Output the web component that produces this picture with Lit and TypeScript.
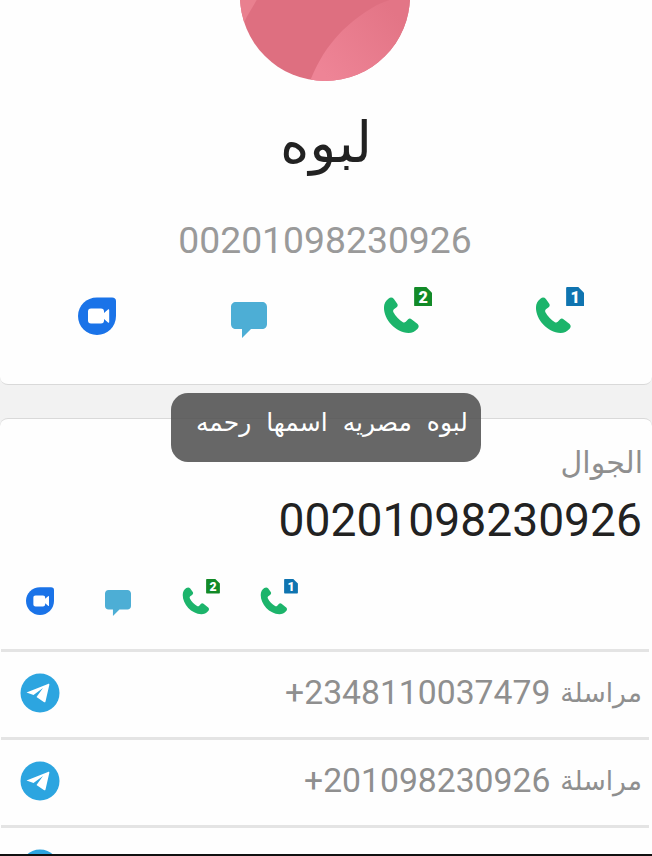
import { LitElement, html, css, svg } from "lit";
import { customElement } from "lit/decorators.js";

const phone = (size: number, num: string, color: string) => html`
  <span class="ph" style="width:${size}px;height:${size}px">
    <svg class="ic" width=${size} height=${size} viewBox="0 0 39 39">
      <path fill="#1cb46b" d="M6 1.5C8 0 10 .5 11.5 2L15 7C16 8.5 15.5 10 14 11L11.5 13C10.5 14 10.5 15 11 16C13 20 17 24 21 26.5C22 27 23 27 24 26L26.5 23.5C27.5 22.5 29 22.5 30 23.5L36.5 28.5C38 30 38 32 36.5 33.5C34 36.5 30.5 38 27 38C13 37 1 24 1 11C1 7 3 3.5 6 1.5Z"/>
    </svg>
    <svg class="sim" width=${size * 0.5} height=${size * 0.52} viewBox="0 0 18 19" style="top:${-(size * 0.27)}px;left:${size * 0.84}px">
      <path fill=${color} d="M1 0H12L18 6V18a1 1 0 0 1-1 1H1a1 1 0 0 1-1-1V1a1 1 0 0 1 1-1Z"/>
      <text x="9" y="15.5" text-anchor="middle" font-family="Roboto, sans-serif" font-weight="900" font-size="16" fill="#fff">${num}</text>
    </svg>
  </span>`;

const duo = (size: number) => html`
  <svg class="ic" width=${size} height=${size} viewBox="0 0 38 38">
    <path fill="#1a73e8" d="M19 .5H34C36.5 .5 38 2 38 4V19C38 29.5 29.5 38 19 38S0 29.5 0 19 8.5 .5 19 .5Z"/>
    <path fill="#fff" d="M13 11.5H23C25 11.5 26 12.7 26 14.5V16L30 12.5C30.6 12 31.2 12.3 31.2 13V25C31.2 25.7 30.6 26 30 25.5L26 22V23.5C26 25.3 25 26.5 23 26.5H13C11 26.5 10 25.3 10 23.5V14.5C10 12.7 11 11.5 13 11.5Z"/>
  </svg>`;

const chat = (size: number) => html`
  <svg class="ic chat" width=${size} height=${size} viewBox="0 0 36 36">
    <path fill="#4daed5" d="M5 0H31C34 0 36 2 36 5V22C36 25 34 27 31 27H20L11 36V27H5C2 27 0 25 0 22V5C0 2 2 0 5 0Z"/>
  </svg>`;

const telegram = () => html`
  <svg width="40" height="40" viewBox="0 0 40 40">
    <circle cx="20" cy="20" r="19.5" fill="#2ca5e0"/>
    <path fill="#fff" d="M6.5 19.5L28 11C29 10.6 29.5 11.2 29.3 12L25.5 28.5C25.3 29.5 24.5 29.5 23.8 29L16.5 24L23 15L13.5 22Z"/>
  </svg>`;

@customElement("app-root")
export class AppRoot extends LitElement {
  static styles = css`
    :host {
      display: block;
      position: relative;
      width: 652px;
      height: 856px;
      overflow: hidden;
      background: #f2f2f2;
      font-family: Roboto, "DejaVu Sans", sans-serif;
    }
    .card {
      background: #fefefe;
      border-bottom: 1px solid #d9d9d9;
      border-radius: 0 0 8px 8px;
    }
    .head {
      height: 385px;
      box-sizing: border-box;
      display: flex;
      flex-direction: column;
      overflow: hidden;
    }
    .avatar {
      display: block;
      margin: -89px 0 0 240px;
      flex: none;
    }
    .name {
      font-family: "DejaVu Sans", sans-serif;
      font-size: 56px;
      line-height: 64px;
      color: #222;
      text-align: center;
      margin-top: 30px;
    }
    .headnum {
      font-size: 37.3px;
      line-height: 44px;
      color: #9a9a9a;
      text-align: center;
      margin-top: 43px;
      padding-right: 2px;
    }
    .icons {
      display: flex;
      align-items: flex-start;
    }
    .cell {
      display: flex;
      justify-content: center;
      align-items: flex-start;
    }
    .ic { display: block; flex: none; }
    .ph { display: block; position: relative; flex: none; }
    .sim { display: block; position: absolute; }
    .toprow {
      margin-top: 35px;
      padding-left: 21px;
    }
    .toprow .cell { width: 152px; height: 38px; }
    .toprow .chat { margin-top: 5px; }
    .main {
      margin-top: 33px;
      border-top: 1px solid #d9d9d9;
      border-bottom: 0;
      border-radius: 8px 8px 0 0;
      height: 438px;
      overflow: hidden;
      display: flex;
      flex-direction: column;
      box-sizing: border-box;
    }
    .label {
      font-family: "DejaVu Sans", sans-serif;
      font-size: 30px;
      line-height: 36px;
      color: #8f8f8f;
      text-align: right;
      padding: 26px 9px 0 0;
    }
    .bignum {
      font-size: 46.2px;
      line-height: 54px;
      color: #222;
      text-align: right;
      padding: 12px 10px 0 0;
    }
    .subrow {
      margin-top: 40px;
      padding-left: 1px;
    }
    .subrow .cell { width: 78px; height: 28px; }
    .subrow .chat { margin-top: 3px; }
    .row {
      display: flex;
      align-items: center;
      justify-content: space-between;
      height: 81px;
      margin: 0 3px 0 1px;
      border-top: 3px solid #e4e4e4;
      padding: 0 7px 4px 19px;
      flex: none;
      box-sizing: content-box;
    }
    .first { margin-top: 34px; }
    .row .txt {
      display: flex;
      flex-direction: row-reverse;
      align-items: center;
      gap: 10px;
      color: #8f8f8f;
    }
    .ar { font-family: "DejaVu Sans", sans-serif; font-size: 26.6px; }
    .num { font-size: 33.7px; }
    .toast {
      position: absolute;
      left: 171px;
      top: 393px;
      width: 310px;
      height: 69px;
      box-sizing: border-box;
      padding: 0 13px 10px 0;
      border-radius: 17px;
      background: rgba(76, 76, 76, 0.85);
      color: #fff;
      font-family: "DejaVu Sans", sans-serif;
      font-size: 25px;
      direction: rtl;
      display: flex;
      align-items: center;
      justify-content: flex-start;
      word-spacing: 7px;
      white-space: nowrap;
    }
    .bar {
      position: absolute;
      left: 0;
      right: 0;
      bottom: 0;
      height: 2px;
      background: #111;
    }
  `;

  render() {
    return html`
      <div class="card head">
        <svg class="avatar" width="170" height="170" viewBox="0 0 170 170">
          <defs>
            <clipPath id="c"><circle cx="85" cy="85" r="85"/></clipPath>
            <linearGradient id="g" x1="0.2" y1="1" x2="1" y2="0.4">
              <stop offset="0" stop-color="#ee8496"/>
              <stop offset="1" stop-color="#e37586"/>
            </linearGradient>
          </defs>
          <g clip-path="url(#c)">
            <rect width="170" height="170" fill="#de6f80"/>
            ${svg`<path fill="url(#g)" d="M70 170C82 140 100 115 137 94C150 88 160 86 170 85V170Z"/>
            <path fill="#e9808f" d="M0 60L25 75L16.7 89L6.7 106L0 120Z"/>`}
          </g>
        </svg>
        <div class="name">لبوه</div>
        <div class="headnum">00201098230926</div>
        <div class="icons toprow">
          <div class="cell">${duo(38)}</div>
          <div class="cell">${chat(36)}</div>
          <div class="cell">${phone(37, "2", "#128a28")}</div>
          <div class="cell">${phone(37, "1", "#0f74b0")}</div>
        </div>
      </div>
      <div class="card main">
        <div class="label">الجوال</div>
        <div class="bignum">00201098230926</div>
        <div class="icons subrow">
          <div class="cell">${duo(28)}</div>
          <div class="cell">${chat(26)}</div>
          <div class="cell">${phone(28, "2", "#128a28")}</div>
          <div class="cell">${phone(28, "1", "#0f74b0")}</div>
        </div>
        <div class="row first">
          ${telegram()}
          <span class="txt"><span class="ar">مراسلة</span><span class="num">+2348110037479</span></span>
        </div>
        <div class="row">
          ${telegram()}
          <span class="txt"><span class="ar">مراسلة</span><span class="num">+201098230926</span></span>
        </div>
        <div class="row">${telegram()}</div>
      </div>
      <div class="toast">لبوه مصريه اسمها رحمه</div>
      <div class="bar"></div>
    `;
  }
}
